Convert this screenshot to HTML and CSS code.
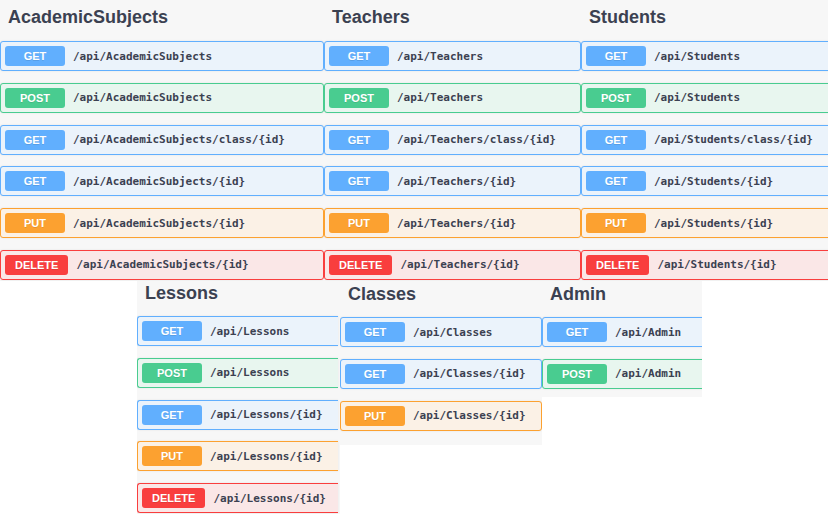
FILE: index.html
```html
<!DOCTYPE html>
<html>
<head>
<meta charset="utf-8">
<link rel="stylesheet" href="styles.css">
</head>
<body>
<div class="top">
  <section class="panel w-acad">
    <h2 class="tag">AcademicSubjects</h2>
    <div class="ops">
      <div class="op get"><span class="method">GET</span><span class="path">/api/AcademicSubjects</span></div>
      <div class="op post"><span class="method">POST</span><span class="path">/api/AcademicSubjects</span></div>
      <div class="op get"><span class="method">GET</span><span class="path">/api/AcademicSubjects/class/{id}</span></div>
      <div class="op get"><span class="method">GET</span><span class="path">/api/AcademicSubjects/{id}</span></div>
      <div class="op put"><span class="method">PUT</span><span class="path">/api/AcademicSubjects/{id}</span></div>
      <div class="op delete"><span class="method">DELETE</span><span class="path">/api/AcademicSubjects/{id}</span></div>
    </div>
  </section>
  <section class="panel w-teach">
    <h2 class="tag">Teachers</h2>
    <div class="ops">
      <div class="op get"><span class="method">GET</span><span class="path">/api/Teachers</span></div>
      <div class="op post"><span class="method">POST</span><span class="path">/api/Teachers</span></div>
      <div class="op get"><span class="method">GET</span><span class="path">/api/Teachers/class/{id}</span></div>
      <div class="op get"><span class="method">GET</span><span class="path">/api/Teachers/{id}</span></div>
      <div class="op put"><span class="method">PUT</span><span class="path">/api/Teachers/{id}</span></div>
      <div class="op delete"><span class="method">DELETE</span><span class="path">/api/Teachers/{id}</span></div>
    </div>
  </section>
  <section class="panel w-stud cut">
    <h2 class="tag">Students</h2>
    <div class="ops">
      <div class="op get"><span class="method">GET</span><span class="path">/api/Students</span></div>
      <div class="op post"><span class="method">POST</span><span class="path">/api/Students</span></div>
      <div class="op get"><span class="method">GET</span><span class="path">/api/Students/class/{id}</span></div>
      <div class="op get"><span class="method">GET</span><span class="path">/api/Students/{id}</span></div>
      <div class="op put"><span class="method">PUT</span><span class="path">/api/Students/{id}</span></div>
      <div class="op delete"><span class="method">DELETE</span><span class="path">/api/Students/{id}</span></div>
    </div>
  </section>
</div>
<div class="bottom">
  <section class="panel w-less cut">
    <h2 class="tag">Lessons</h2>
    <div class="ops">
      <div class="op get"><span class="method">GET</span><span class="path">/api/Lessons</span></div>
      <div class="op post"><span class="method">POST</span><span class="path">/api/Lessons</span></div>
      <div class="op get"><span class="method">GET</span><span class="path">/api/Lessons/{id}</span></div>
      <div class="op put"><span class="method">PUT</span><span class="path">/api/Lessons/{id}</span></div>
      <div class="op delete"><span class="method">DELETE</span><span class="path">/api/Lessons/{id}</span></div>
    </div>
  </section>
  <section class="panel w-cls">
    <h2 class="tag">Classes</h2>
    <div class="ops">
      <div class="op get"><span class="method">GET</span><span class="path">/api/Classes</span></div>
      <div class="op get"><span class="method">GET</span><span class="path">/api/Classes/{id}</span></div>
      <div class="op put"><span class="method">PUT</span><span class="path">/api/Classes/{id}</span></div>
    </div>
  </section>
  <section class="panel w-adm cut">
    <h2 class="tag">Admin</h2>
    <div class="ops">
      <div class="op get"><span class="method">GET</span><span class="path">/api/Admin</span></div>
      <div class="op post"><span class="method">POST</span><span class="path">/api/Admin</span></div>
    </div>
  </section>
</div>
</body>
</html>
```

FILE: styles.css
```css
html, body {
  margin: 0;
  padding: 0;
  background: #ffffff;
}
body {
  width: 828px;
  height: 514px;
  overflow: hidden;
  font-family: "Liberation Sans", Arial, sans-serif;
}
.top {
  display: flex;
  height: 281px;
}
.panel {
  background: #f7f7f7;
  overflow: hidden;
  flex: none;
}
.w-acad { width: 324px; }
.w-teach { width: 257px; }
.w-stud { width: 247px; }

.tag {
  margin: 0;
  box-sizing: border-box;
  height: 41px;
  padding: 5px 0 0 8px;
  line-height: 24px;
  font-size: 18px;
  font-weight: 700;
  color: #3b4151;
}
.ops {
  display: flex;
  flex-direction: column;
  gap: 11.8px;
}
.op {
  height: 30px;
  box-sizing: border-box;
  border: 1px solid;
  border-radius: 3px;
  display: flex;
  align-items: center;
  padding: 0 4px;
  box-shadow: 0 0 2px rgba(0, 0, 0, 0.1);
  white-space: nowrap;
}
.cut .op {
  margin-right: -10px;
}
.method {
  min-width: 60px;
  height: 20px;
  box-sizing: border-box;
  border-radius: 3px;
  color: #ffffff;
  font-family: "Liberation Sans", Arial, sans-serif;
  font-size: 11px;
  font-weight: 700;
  display: flex;
  align-items: center;
  justify-content: center;
  text-shadow: 0 1px 0 rgba(0, 0, 0, 0.1);
}
.delete .method {
  padding: 0 10px;
}
.path {
  margin-left: 8px;
  font-family: "DejaVu Sans Mono", "Liberation Mono", monospace;
  font-size: 11px;
  font-weight: 700;
  color: #3b4151;
}

.get { background: #ebf3fb; border-color: #61affe; }
.get .method { background: #61affe; }
.post { background: #e8f6ef; border-color: #49cc90; }
.post .method { background: #49cc90; }
.put { background: #fbf1e6; border-color: #fca130; }
.put .method { background: #fca130; }
.delete { background: #fae7e7; border-color: #f93e3e; }
.delete .method { background: #f93e3e; }

.bottom {
  display: flex;
  align-items: flex-start;
  margin-left: 137px;
}
.bottom .tag {
  height: 35px;
  padding-top: 0;
}
.w-less { width: 203px; height: 233px; }
.w-less .op { margin-right: 2px; border-right: 0; border-radius: 3px 0 0 3px; }
.w-cls { width: 202px; height: 164px; }
.w-adm { width: 160px; height: 116px; }
.w-cls .tag, .w-adm .tag {
  height: 36px;
  padding-top: 1px;
}
```
